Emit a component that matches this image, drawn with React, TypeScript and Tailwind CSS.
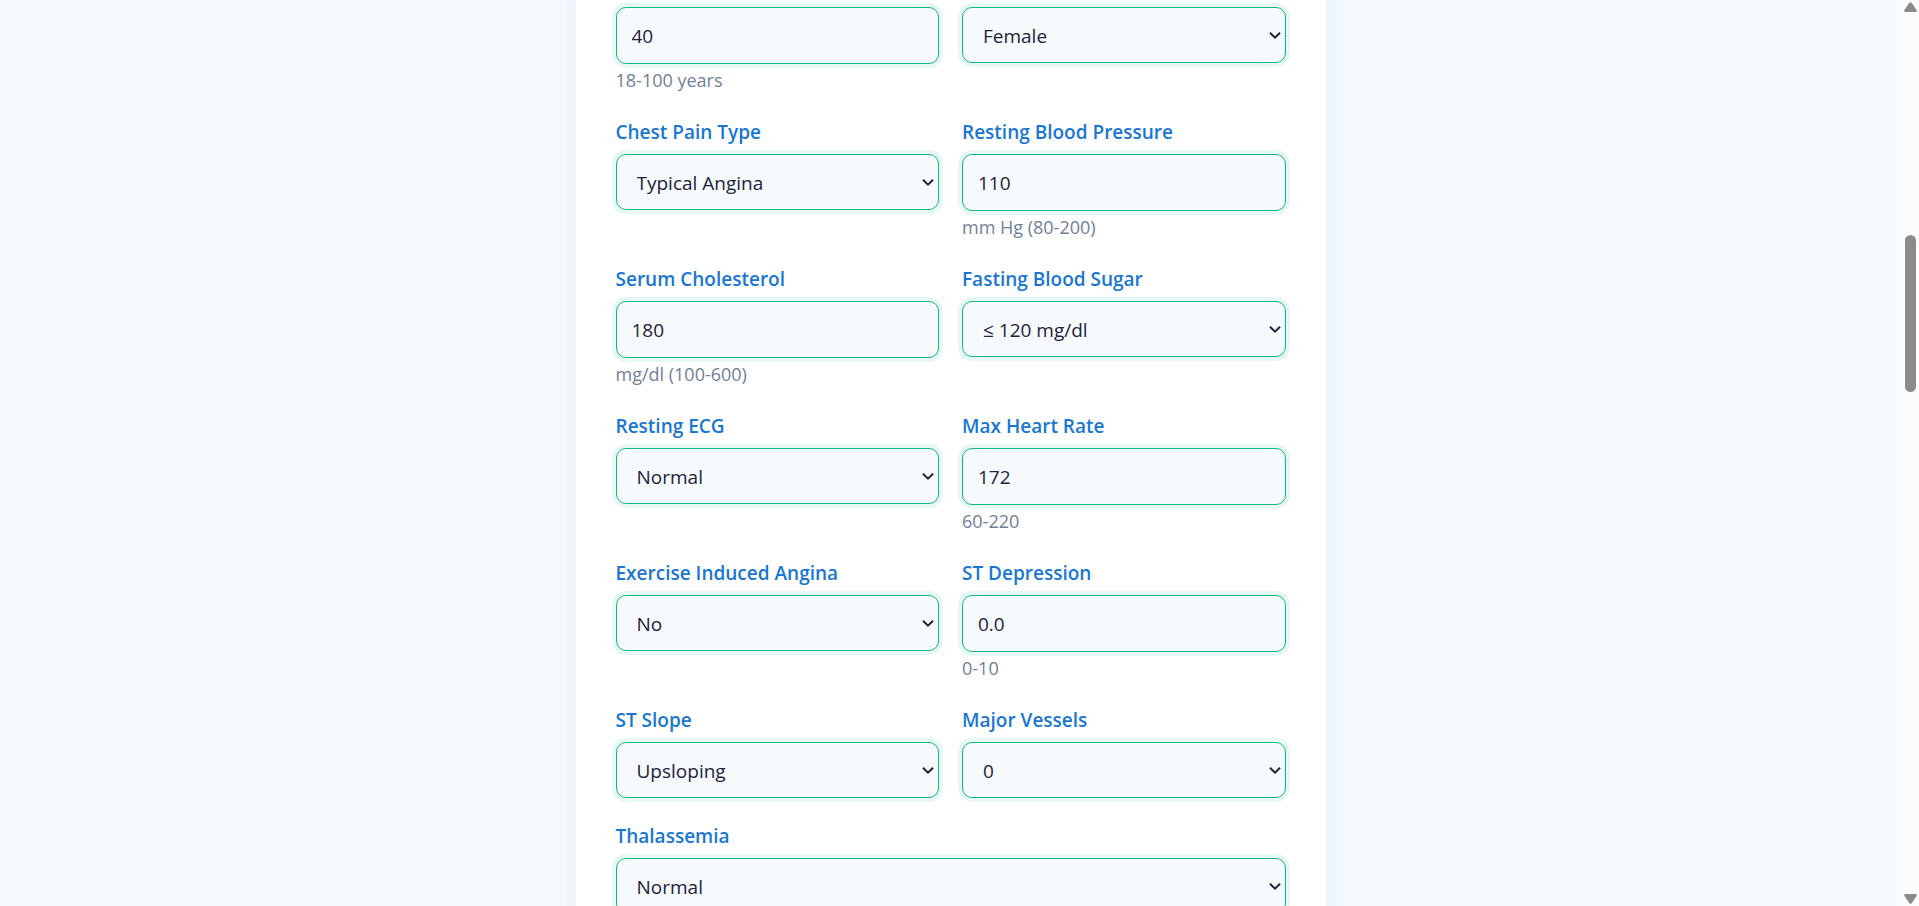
import { useState } from "react";

type Field = {
  id: string;
  label: string;
  value: string;
  options?: string[];
  hint?: string;
  wide?: boolean;
  bare?: boolean;
};

const fields: Field[] = [
  { id: "age", label: "Age", value: "40", hint: "18-100 years", bare: true },
  { id: "sex", label: "Sex", value: "Female", options: ["Female", "Male"], bare: true },
  {
    id: "cp",
    label: "Chest Pain Type",
    value: "Typical Angina",
    options: ["Typical Angina", "Atypical Angina", "Non-anginal Pain", "Asymptomatic"],
  },
  { id: "trestbps", label: "Resting Blood Pressure", value: "110", hint: "mm Hg (80-200)" },
  { id: "chol", label: "Serum Cholesterol", value: "180", hint: "mg/dl (100-600)" },
  {
    id: "fbs",
    label: "Fasting Blood Sugar",
    value: "≤ 120 mg/dl",
    options: ["≤ 120 mg/dl", "> 120 mg/dl"],
  },
  {
    id: "restecg",
    label: "Resting ECG",
    value: "Normal",
    options: ["Normal", "ST-T Abnormality", "LV Hypertrophy"],
  },
  { id: "thalach", label: "Max Heart Rate", value: "172", hint: "60-220" },
  { id: "exang", label: "Exercise Induced Angina", value: "No", options: ["No", "Yes"] },
  { id: "oldpeak", label: "ST Depression", value: "0.0", hint: "0-10" },
  {
    id: "slope",
    label: "ST Slope",
    value: "Upsloping",
    options: ["Upsloping", "Flat", "Downsloping"],
  },
  { id: "ca", label: "Major Vessels", value: "0", options: ["0", "1", "2", "3"] },
  {
    id: "thal",
    label: "Thalassemia",
    value: "Normal",
    options: ["Normal", "Fixed Defect", "Reversible Defect"],
    wide: true,
  },
];

function FormField({ field }: { field: Field }) {
  const [value, setValue] = useState(field.value);
  const ariaLabel = field.bare ? field.label : undefined;
  return (
    <div className={field.wide ? "col-span-2 flex flex-col" : "flex flex-col"}>
      {!field.bare && (
        <label htmlFor={field.id} className="mb-2 text-[19px] leading-7 font-semibold text-[#1976d2]">
          {field.label}
        </label>
      )}
      {field.options ? (
        <div className="relative">
          <select
            id={field.id}
            aria-label={ariaLabel}
            value={value}
            onChange={(e) => setValue(e.target.value)}
            className="block h-14 w-full appearance-none rounded-[10px] border border-[#10b981] bg-[#f7fafd] px-5 pt-0.5 text-[19px] text-[#22223b] ring-4 ring-[#10b981]/10 outline-none"
          >
            {field.options.map((option) => (
              <option key={option}>{option}</option>
            ))}
          </select>
          <svg
            aria-hidden="true"
            viewBox="0 0 12 8"
            className="pointer-events-none absolute top-6 right-[5px] h-2 w-3 fill-none stroke-[#22223b] stroke-2"
          >
            <path d="M1 1.8 L6 6.6 L11 1.8" />
          </svg>
        </div>
      ) : (
        <input
          id={field.id}
          aria-label={ariaLabel}
          type="text"
          inputMode="decimal"
          value={value}
          onChange={(e) => setValue(e.target.value)}
          className="block h-[57px] w-full rounded-[10px] border border-[#10b981] bg-[#f7fafd] px-[15px] text-[19px] text-[#22223b] ring-4 ring-[#10b981]/10 outline-none"
        />
      )}
      {field.hint && (
        <small className="mt-0.5 text-[18px] leading-7 text-[#718096]">{field.hint}</small>
      )}
    </div>
  );
}

export default function App() {
  return (
    <div className="flex h-screen overflow-hidden bg-[#f7fbfe] font-['Segoe_UI','Open_Sans',sans-serif]">
      <main className="flex flex-1 items-start justify-center overflow-hidden">
        <form className="-mt-10 w-full max-w-[750px] bg-white px-10 pt-[47px] pb-10 shadow-[0_8px_32px_rgba(25,118,210,0.09)]">
          <div className="grid grid-cols-2 gap-x-[23px] gap-y-6">
            {fields.map((field) => (
              <FormField key={field.id} field={field} />
            ))}
          </div>
        </form>
      </main>
      <div aria-hidden="true" className="flex w-[18px] flex-col items-center justify-between bg-[#fcfcfc] py-0.5">
        <svg viewBox="0 0 13 10" className="h-2.5 w-[13px] fill-[#8b8b8b]">
          <path d="M5.2 1.1 Q6.5 -0.6 7.8 1.1 L12.6 8 Q13.3 10 11.6 10 H1.4 Q-0.3 10 0.4 8 Z" />
        </svg>
        <div className="flex w-[11px] flex-1 flex-col pt-[223px]">
          <div className="h-[157px] rounded-full bg-[#8b8b8b]" />
        </div>
        <svg viewBox="0 0 13 10" className="h-2.5 w-[13px] fill-[#8b8b8b]">
          <path d="M5.2 8.9 Q6.5 10.6 7.8 8.9 L12.6 2 Q13.3 0 11.6 0 H1.4 Q-0.3 0 0.4 2 Z" />
        </svg>
      </div>
    </div>
  );
}
